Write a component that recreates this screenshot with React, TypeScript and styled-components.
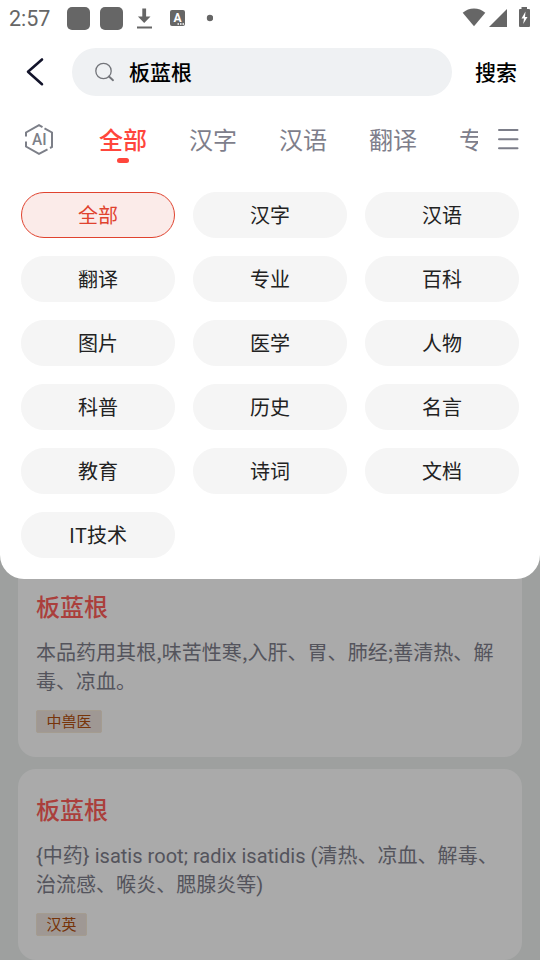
import React from "react";
import styled, { createGlobalStyle } from "styled-components";

const GlobalStyle = createGlobalStyle`
  * { box-sizing: border-box; }
  body {
    margin: 0;
    font-family: Roboto, "Noto Sans CJK SC", sans-serif;
    overflow: hidden;
  }
`;

const Screen = styled.div`
  position: relative;
  width: 540px;
  height: 960px;
  overflow: hidden;
  background: #edf1ef;
`;

const Sheet = styled.header`
  position: relative;
  z-index: 2;
  height: 579px;
  background: #fff;
  border-radius: 0 0 24px 24px;
`;

const StatusBar = styled.div`
  display: flex;
  align-items: center;
  height: 36px;
  padding: 0 8px 0 9px;
  color: #666;
`;

const Clock = styled.span`
  width: 58px;
  font-size: 21.5px;
  line-height: 36px;
  font-weight: 400;
  padding-top: 2px;
`;

const AppBlock = styled.span`
  width: 23px;
  height: 23px;
  margin-right: 10px;
  border-radius: 5px;
  background: #666;
`;

const StatusIcons = styled.svg`
  display: block;
  flex: none;
`;

const Spacer = styled.span`
  flex: 1;
`;

const SearchRow = styled.div`
  display: flex;
  align-items: center;
  height: 48px;
  margin-top: 12px;
`;

const BackButton = styled.button`
  width: 72px;
  height: 48px;
  padding: 0;
  border: 0;
  background: none;
`;

const SearchField = styled.div`
  display: flex;
  align-items: center;
  width: 380px;
  height: 48px;
  padding-left: 22px;
  border-radius: 24px;
  background: #eff1f3;
  color: #000;
  font-size: 21px;
  font-weight: 500;
`;

const SearchText = styled.span`
  margin-left: 13px;
  padding-bottom: 2px;
`;

const SearchButton = styled.button`
  width: 88px;
  height: 48px;
  padding: 0 0 2px;
  border: 0;
  background: none;
  color: #000;
  font: 500 21px Roboto, "Noto Sans CJK SC", sans-serif;
`;

const TabRow = styled.nav`
  display: flex;
  height: 88px;
`;

const AiLink = styled.div`
  width: 99px;
  padding: 26px 0 0 22px;
`;

const TabStrip = styled.div`
  display: flex;
  gap: 42px;
  width: 379px;
  overflow: hidden;
`;

const Tab = styled.div<{ $active?: boolean }>`
  display: flex;
  flex: none;
  flex-direction: column;
  align-items: center;
  width: 48px;
  padding-top: 27px;
  font-size: 24px;
  line-height: 36px;
  white-space: nowrap;
  font-weight: ${(p) => (p.$active ? 500 : 400)};
  color: ${(p) => (p.$active ? "#ff463c" : "#7e7e8b")};
`;

const TabMark = styled.span`
  width: 12px;
  height: 5px;
  margin-top: -1px;
  border-radius: 2.5px;
  background: #ff463c;
`;

const MenuButton = styled.button`
  display: block;
  width: 62px;
  padding: 0 0 0 20px;
  border: 0;
  background: none;
  text-align: left;
`;

const CategoryGrid = styled.div`
  display: grid;
  grid-template-columns: repeat(3, 154px);
  grid-auto-rows: 46px;
  gap: 18px;
  margin: 8px 0 0 21px;
`;

const Category = styled.button<{ $active?: boolean }>`
  padding: 0;
  border: 1px solid ${(p) => (p.$active ? "#e0432f" : "#f5f5f5")};
  border-radius: 23px;
  background: ${(p) => (p.$active ? "#fbebe9" : "#f5f5f5")};
  color: ${(p) => (p.$active ? "#e0432f" : "#222")};
  font: 400 20px/44px "Noto Sans CJK SC", sans-serif;
`;

const Scrim = styled.div`
  position: absolute;
  inset: 0;
  z-index: 1;
  background: rgba(0, 0, 0, 0.333);
`;

const Results = styled.main`
  display: flex;
  flex-direction: column;
  gap: 12px;
  margin-top: -25px;
  padding: 0 18px;
`;

const Card = styled.article<{ $height: number }>`
  flex: none;
  height: ${(p) => p.$height}px;
  padding: 24px 18px 0;
  border-radius: 18px;
  background: #fff;
`;

const First = styled.div`
  padding-top: 12px;
`;

const CardTitle = styled.h2`
  margin: 0;
  color: #ff5f5a;
  font-size: 24px;
  line-height: 36px;
  font-weight: 500;
`;

const CardText = styled.p<{ $chinese?: boolean }>`
  margin: ${(p) => (p.$chinese ? "11px" : "13px")} -10px 0 0;
  padding-bottom: ${(p) => (p.$chinese ? "2px" : "0")};
  color: #7e7e8b;
  font-family: ${(p) => (p.$chinese ? "" : "Roboto, ")}"Noto Sans CJK SC", sans-serif;
  font-size: 20px;
  line-height: 29px;
  letter-spacing: 0.03px;
`;

const Tag = styled.span`
  display: block;
  width: fit-content;
  height: 23px;
  margin-top: 13px;
  padding: 0 9.5px;
  border: 1px solid #f7ead9;
  border-radius: 2px;
  background: #efe5de;
  color: #b34f0e;
  font-size: 15px;
  line-height: 22px;
`;

const tabs = ["全部", "汉字", "汉语", "翻译", "专业"];

const categories = [
  "全部", "汉字", "汉语",
  "翻译", "专业", "百科",
  "图片", "医学", "人物",
  "科普", "历史", "名言",
  "教育", "诗词", "文档",
  "IT技术",
];

export default function App() {
  return (
    <>
      <GlobalStyle />
      <Screen>
        <Sheet>
          <StatusBar>
            <Clock>2:57</Clock>
            <AppBlock />
            <AppBlock />
            <StatusIcons width="80" height="36" viewBox="0 0 80 36" fill="#666">
              <path d="M9.300 8.500h3.800v8h4.400L11.200 23l-6.300-6.500h4.400zM4 26.500h15v2H4z" />
              <rect x="37" y="10" width="15" height="16" rx="2" />
              <text x="44.500" y="21.500" textAnchor="middle" fontFamily="Roboto" fontWeight="700" fontSize="12" fill="#fff">A</text>
              <path d="M44.500 23.200h1.500v1.500h-1.500zM47 23.200h1.500v1.500H47zM49.500 23.200H51v1.500h-1.500z" fill="#fff" />
              <circle cx="77" cy="18" r="3.200" />
            </StatusIcons>
            <Spacer />
            <StatusIcons width="72" height="36" viewBox="460 0 72 36" fill="#666">
              <path d="M462.700 12.700C469 7 479 7 485.300 12.700L474 26.300z" />
              <path d="M507 9v18h-18z" />
              <path d="M521.500 7h5.500v2h2a1 1 0 0 1 1 1v16a1 1 0 0 1-1 1h-9a1 1 0 0 1-1-1V10a1 1 0 0 1 1-1h1.500z" />
              <path d="M525.500 11.500l-4 7h2.500l-.8 5.500 4.300-7H525z" fill="#fff" />
            </StatusIcons>
          </StatusBar>

          <SearchRow>
            <BackButton aria-label="返回">
              <svg width="72" height="48" viewBox="0 0 72 48" fill="none" stroke="#13142b" strokeWidth="2.600" strokeLinecap="round" strokeLinejoin="round">
                <path d="M42 11.500L28 23.700l14 12.500" />
              </svg>
            </BackButton>
            <SearchField>
              <svg width="22" height="22" viewBox="0 0 22 22" fill="none" stroke="#73757a" strokeWidth="1.300" strokeLinecap="round">
                <circle cx="9.500" cy="10" r="7.700" />
                <path d="M15 15.500l4 3.700" strokeWidth="1.900" />
              </svg>
              <SearchText>板蓝根</SearchText>
            </SearchField>
            <SearchButton>搜索</SearchButton>
          </SearchRow>

          <TabRow>
            <AiLink>
              <svg width="34" height="36" viewBox="0 0 34 36" fill="none" stroke="#7c7f88" strokeWidth="2">
                <path d="M4 14.500V10.500L17 3.200l3.500 2M22.500 6.300L30 10.500V25l-2 1M25.500 27.300L17 31.900 4 24.500V19.500" />
                <text x="10" y="23" textLength="14.500" lengthAdjust="spacingAndGlyphs" fontFamily="Roboto" fontWeight="500" fontSize="16" fill="#7c7f88" stroke="none">AI</text>
              </svg>
            </AiLink>
            <TabStrip>
              {tabs.map((label, i) => (
                <Tab key={label} $active={i === 0}>
                  {label}
                  {i === 0 && <TabMark />}
                </Tab>
              ))}
            </TabStrip>
            <MenuButton aria-label="更多分类">
              <svg width="22" height="88" viewBox="0 0 22 88" fill="none" stroke="#7c7e89" strokeWidth="2" strokeLinecap="round">
                <path d="M1 34.100h18.500M1 43.200h18.500M1 52.300h18.500" />
              </svg>
            </MenuButton>
          </TabRow>

          <CategoryGrid>
            {categories.map((label, i) => (
              <Category key={label} $active={i === 0}>{label}</Category>
            ))}
          </CategoryGrid>
        </Sheet>

        <Results>
          <Card $height={203}>
            <First>
              <CardTitle>板蓝根</CardTitle>
              <CardText $chinese>本品药用其根,味苦性寒,入肝、胃、肺经;善清热、解毒、凉血。</CardText>
              <Tag>中兽医</Tag>
            </First>
          </Card>
          <Card $height={191}>
            <CardTitle>板蓝根</CardTitle>
            <CardText>{"{中药} isatis root; radix isatidis (清热、凉血、解毒、治流感、喉炎、腮腺炎等)"}</CardText>
            <Tag>汉英</Tag>
          </Card>
        </Results>
        <Scrim />
      </Screen>
    </>
  );
}
